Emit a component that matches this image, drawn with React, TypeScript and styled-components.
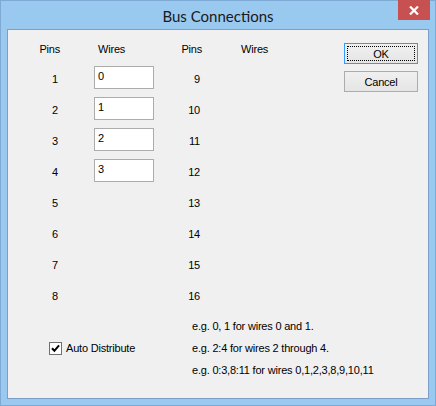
import styled, { createGlobalStyle } from "styled-components";

const WIRES = ["0", "1", "2", "3"];
const HELP = [
  "e.g. 0, 1 for wires 0 and 1.",
  "e.g. 2:4 for wires 2 through 4.",
  "e.g. 0:3,8:11 for wires 0,1,2,3,8,9,10,11",
];

const GlobalStyle = createGlobalStyle`
  html, body {
    margin: 0;
    padding: 0;
    background: #ffffff;
  }
  body {
    font-family: "Liberation Sans", Arial, sans-serif;
  }
  * {
    box-sizing: border-box;
  }
`;

export default function App() {
  return (
    <>
      <GlobalStyle />
      <Window>
        <TitleBar>
          <span />
          <Title>Bus Connections</Title>
          <CloseButton aria-label="Close">
            <svg width="10" height="9" viewBox="0 0 10 9">
              <path d="M1 0.5 L9 8.5 M9 0.5 L1 8.5" stroke="#fff" strokeWidth="2.2" />
            </svg>
          </CloseButton>
        </TitleBar>

        <Client>
          <Main>
            <PinGrid>
              <PinCell $header>Pins</PinCell>
              <WireHeader>Wires</WireHeader>
              <PinCell $header>Pins</PinCell>
              <WireHeader>Wires</WireHeader>

              {Array.from({ length: 8 }, (_, i) => (
                <Row key={i} index={i} />
              ))}
            </PinGrid>

            <Bottom>
              <CheckLabel>
                <CheckBox>
                  <svg width="11" height="11" viewBox="0 0 11 11">
                    <path d="M2 5.2 L4.4 7.8 L9 2.4" stroke="#000" strokeWidth="2" fill="none" />
                  </svg>
                </CheckBox>
                Auto Distribute
              </CheckLabel>
              {HELP.map((line) => (
                <HelpLine key={line}>{line}</HelpLine>
              ))}
            </Bottom>
          </Main>

          <ButtonColumn>
            <DialogButton $focused>
              <FocusRing $focused>OK</FocusRing>
            </DialogButton>
            <DialogButton>
              <FocusRing>Cancel</FocusRing>
            </DialogButton>
          </ButtonColumn>
        </Client>
      </Window>
    </>
  );
}

const Row = ({ index }: { index: number }) => {
  const wire = WIRES[index];
  return (
    <>
      <PinCell>{index + 1}</PinCell>
      {wire !== undefined ? <WireBox readOnly value={wire} /> : <span />}
      <PinCell>{index + 9}</PinCell>
      <span />
    </>
  );
};

const Window = styled.div`
  width: 436px;
  height: 406px;
  background: #99c9ef;
  border: 1px solid #7ea9d4;
  display: flex;
  flex-direction: column;
`;

const TitleBar = styled.div`
  height: 28px;
  flex-shrink: 0;
  display: grid;
  grid-template-columns: 1fr auto 1fr;
  align-items: center;
`;

const Title = styled.div`
  font-family: Lato, "Open Sans", sans-serif;
  font-size: 15px;
  color: #1a1a1a;
  padding-top: 1px;
`;

const CloseButton = styled.div`
  justify-self: end;
  align-self: start;
  width: 32px;
  height: 20px;
  margin-top: -1px;
  margin-right: 5px;
  background: #c75050;
  display: flex;
  align-items: center;
  justify-content: center;
`;

const Client = styled.div`
  margin: 0 6px;
  height: 370px;
  background: #f0f0f0;
  border: 1px solid #7b9fc6;
  display: flex;
  font-size: 11px;
  letter-spacing: -0.2px;
  color: #000;
`;

const Main = styled.div`
  flex: 1;
  min-width: 0;
  padding: 4px 0 0 12px;
  display: flex;
  flex-direction: column;
`;

const PinGrid = styled.div`
  display: grid;
  grid-template-columns: 40px 94px 48px 95px;
  grid-template-rows: 29px repeat(8, 31px);
  align-items: center;
`;

const PinCell = styled.div<{ $header?: boolean }>`
  text-align: right;
  padding-right: ${({ $header }) => ($header ? "0" : "2px")};
  white-space: nowrap;
`;

const WireHeader = styled.div`
  justify-self: end;
  width: 60px;
  padding-left: 4px;
`;

const WireBox = styled.input`
  justify-self: end;
  width: 60px;
  height: 23px;
  margin: 0 0 2px;
  padding: 2px 3px 6px;
  border: 1px solid #acacac;
  background: #fff;
  font-family: "Liberation Sans", Arial, sans-serif;
  font-size: 11px;
  letter-spacing: -0.2px;
  color: #000;
  outline: none;
`;

const Bottom = styled.div`
  margin-top: 4px;
  display: grid;
  grid-template-columns: 172px auto;
  grid-template-rows: repeat(3, 22px);
  align-items: center;
`;

const CheckLabel = styled.div`
  grid-column: 1;
  grid-row: 2;
  padding-left: 29px;
  display: flex;
  align-items: center;
  gap: 4px;
  white-space: nowrap;
`;

const CheckBox = styled.span`
  width: 13px;
  height: 13px;
  border: 1px solid #707070;
  background: #fff;
  display: flex;
  align-items: center;
  justify-content: center;
`;

const HelpLine = styled.div`
  grid-column: 2;
  white-space: nowrap;
`;

const ButtonColumn = styled.div`
  flex-shrink: 0;
  display: flex;
  flex-direction: column;
  gap: 7px;
  padding: 13px 10px 0 0;
`;

const DialogButton = styled.div<{ $focused?: boolean }>`
  width: 74px;
  height: 21px;
  padding: 2px;
  border: 1px solid ${({ $focused }) => ($focused ? "#3399ff" : "#acacac")};
  background: linear-gradient(#f0f0f0, #e5e5e5);
  display: flex;
`;

const FocusRing = styled.span<{ $focused?: boolean }>`
  flex: 1;
  display: flex;
  align-items: center;
  justify-content: center;
  border: 1px dotted ${({ $focused }) => ($focused ? "#000" : "transparent")};
  font-size: 11px;
  padding-top: 1px;
`;
